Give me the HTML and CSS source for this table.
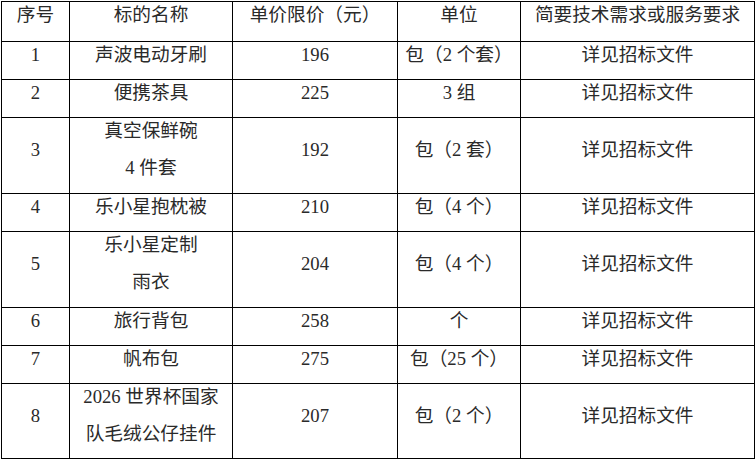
FILE: index.html
```html
<!DOCTYPE html>
<html lang="zh-CN">
<head>
<meta charset="utf-8">
<title>采购清单</title>
<link rel="stylesheet" href="styles.css">
</head>
<body>
<table class="grid">
  <colgroup>
    <col class="c1"><col class="c2"><col class="c3"><col class="c4"><col class="c5">
  </colgroup>
  <tr class="head">
    <td><div class="ln">序号</div></td>
    <td><div class="ln">标的名称</div></td>
    <td><div class="ln">单价限价（元）</div></td>
    <td><div class="ln">单位</div></td>
    <td><div class="ln">简要技术需求或服务要求</div></td>
  </tr>
  <tr class="r1">
    <td><div class="ln">1</div></td>
    <td><div class="ln">声波电动牙刷</div></td>
    <td><div class="ln">196</div></td>
    <td><div class="ln">包（2 个套）</div></td>
    <td><div class="ln">详见招标文件</div></td>
  </tr>
  <tr class="r1">
    <td><div class="ln">2</div></td>
    <td><div class="ln">便携茶具</div></td>
    <td><div class="ln">225</div></td>
    <td><div class="ln">3 组</div></td>
    <td><div class="ln">详见招标文件</div></td>
  </tr>
  <tr class="r2">
    <td><div class="ln">3</div></td>
    <td><div class="ln">真空保鲜碗</div><div class="ln">4 件套</div></td>
    <td><div class="ln">192</div></td>
    <td><div class="ln">包（2 套）</div></td>
    <td><div class="ln">详见招标文件</div></td>
  </tr>
  <tr class="r1">
    <td><div class="ln">4</div></td>
    <td><div class="ln">乐小星抱枕被</div></td>
    <td><div class="ln">210</div></td>
    <td><div class="ln">包（4 个）</div></td>
    <td><div class="ln">详见招标文件</div></td>
  </tr>
  <tr class="r2">
    <td><div class="ln">5</div></td>
    <td><div class="ln">乐小星定制</div><div class="ln">雨衣</div></td>
    <td><div class="ln">204</div></td>
    <td><div class="ln">包（4 个）</div></td>
    <td><div class="ln">详见招标文件</div></td>
  </tr>
  <tr class="r1">
    <td><div class="ln">6</div></td>
    <td><div class="ln">旅行背包</div></td>
    <td><div class="ln">258</div></td>
    <td><div class="ln">个</div></td>
    <td><div class="ln">详见招标文件</div></td>
  </tr>
  <tr class="r1">
    <td><div class="ln">7</div></td>
    <td><div class="ln">帆布包</div></td>
    <td><div class="ln">275</div></td>
    <td><div class="ln">包（25 个）</div></td>
    <td><div class="ln">详见招标文件</div></td>
  </tr>
  <tr class="r3">
    <td><div class="ln">8</div></td>
    <td><div class="ln">2026 世界杯国家</div><div class="ln">队毛绒公仔挂件</div></td>
    <td><div class="ln">207</div></td>
    <td><div class="ln">包（2 个）</div></td>
    <td><div class="ln">详见招标文件</div></td>
  </tr>
</table>
</body>
</html>
```
FILE: styles.css
```css
html, body {
  margin: 0;
  padding: 0;
  background: #ffffff;
}
body {
  padding: 1px 0 0 1px;
}
.grid {
  border-collapse: collapse;
  table-layout: fixed;
  width: 753px;
  font-family: "Liberation Serif", "Noto Sans CJK SC", serif;
  font-size: 18.67px;
  color: #2a2a2a;
}
.c1 { width: 68px; }
.c2 { width: 163px; }
.c3 { width: 165px; }
.c4 { width: 123px; }
.c5 { width: 234px; }
.grid td {
  border: 1px solid #000;
  padding: 0;
  text-align: center;
  vertical-align: middle;
  white-space: nowrap;
}
.ln {
  height: 37px;
  line-height: 26px;
}
.head td { height: 39px; }
.head .ln { height: 39px; }
.r1 td { height: 37px; }
.r2 td { height: 75px; }
.r3 td { height: 74px; }
.r2 td .ln + .ln { height: 38px; }
```
